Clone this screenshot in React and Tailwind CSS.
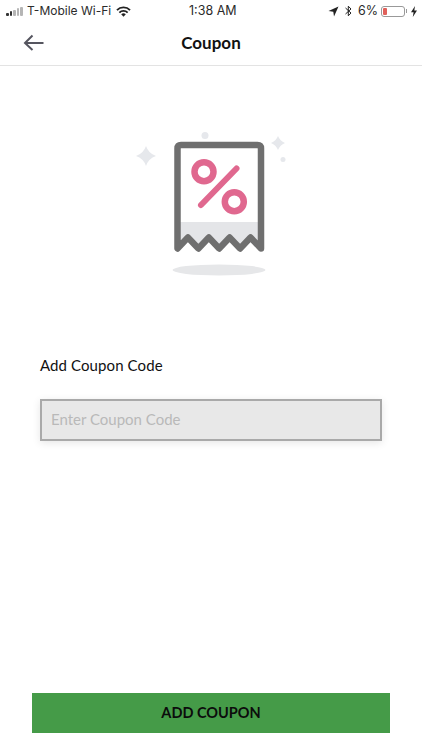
export default function App() {
  const lato = { fontFamily: 'Lato, "Open Sans", sans-serif' };
  return (
    <div className="w-[422px] h-[750px] bg-white flex flex-col overflow-hidden" style={lato}>
      <div className="h-[22px] relative flex items-center pl-[6px] pr-[5px] text-[13px] text-[#2b2b2b] font-['Inter',sans-serif]">
        <div className="flex items-end gap-[1px] w-[18px] h-[9px]">
          <span className="w-[2.5px] h-[3px] bg-[#333] rounded-[1px]" />
          <span className="w-[2.5px] h-[4.5px] bg-[#333] rounded-[1px]" />
          <span className="w-[2.5px] h-[6px] bg-[#b5b5b5] rounded-[1px]" />
          <span className="w-[2.5px] h-[8px] bg-[#b5b5b5] rounded-[1px]" />
          <span className="w-[2.5px] h-[9px] bg-[#b5b5b5] rounded-[1px]" />
        </div>
        <span className="ml-[3px] text-[12px] whitespace-nowrap">T-Mobile Wi-Fi</span>
        <svg className="ml-[5px]" width="15" height="11" viewBox="0 0 15 11">
          <path d="M0.3 3.4A10.2 10.2 0 0 1 14.700 3.4L13.400 4.800A8.300 8.300 0 0 0 1.600 4.800Z" fill="#222" />
          <path d="M2.700 5.900A6.800 6.800 0 0 1 12.300 5.900L11 7.200A5 5 0 0 0 4 7.200Z" fill="#222" />
          <path d="M5.200 8.300A3.300 3.300 0 0 1 9.800 8.300L7.500 10.700Z" fill="#222" />
        </svg>
        <span className="absolute left-[189px] text-[12.5px] whitespace-nowrap">1:38 AM</span>
        <div className="ml-auto flex items-center">
          <svg width="11" height="11" viewBox="0 0 11 11">
            <path d="M10.500 0.500L0.500 5L5.300 5.700L6 10.500Z" fill="#222" />
          </svg>
          <svg className="ml-[6px]" width="7" height="12" viewBox="0 0 7 12" fill="none">
            <path d="M0.500 3L6 8L3.300 10.800V1.200L6 4L0.500 9" stroke="#222" strokeWidth="1" />
          </svg>
          <span className="ml-[6px] text-[12.5px]">6%</span>
          <div className="ml-[3px] relative w-[24px] h-[11px] border border-[#999] rounded-[3px] p-[1px]">
            <div className="w-[4px] h-full bg-[#e0605a] rounded-[1px]" />
          </div>
          <span className="ml-[1px] w-[1px] h-[4px] bg-[#999]" />
          <svg className="ml-[4px]" width="6" height="11" viewBox="0 0 6 11">
            <path d="M4 0L0 6.300H2.600L1.800 11L6 4.400H3.300Z" fill="#222" />
          </svg>
        </div>
      </div>

      <div className="h-[44px] relative flex items-center justify-center border-b border-[#e3e3e3]">
        <svg className="absolute left-[23px] top-[11px]" width="22" height="18" viewBox="0 0 22 18" fill="none">
          <path d="M20.500 10H2M9.500 2.500L2 10L9.500 17" stroke="#55555f" strokeWidth="2" />
        </svg>
        <span className="text-[17px] font-bold text-[#111] mt-[-1px]">Coupon</span>
      </div>

      <svg className="ml-[125px] mt-[54px] shrink-0" width="175" height="165" viewBox="125 120 175 165" fill="none">
        <ellipse cx="219" cy="270" rx="46.500" ry="5.500" fill="#e6e7e9" />
        <path d="M146 146Q148.500 153.500 156 156Q148.500 158.500 146 166Q143.500 158.500 136 156Q143.500 153.500 146 146Z" fill="#e6e8ec" />
        <path d="M278 136Q280 141 285 143Q280 145 278 150Q276 145 271 143Q276 141 278 136Z" fill="#e6e8ec" />
        <circle cx="205" cy="135.500" r="3.500" fill="#e6e8ec" />
        <circle cx="283" cy="159.500" r="2.500" fill="#e6e8ec" />
        <path d="M177.500 222H261V248.500L250.500 237.500L240.100 248.500L229.600 237.500L219.200 248.500L208.800 237.500L198.400 248.500L187.900 237.500L177.500 248.500Z" fill="#e4e5e8" />
        <path d="M177.500 248.500V148.500Q177.500 145 181 145H257.500Q261 145 261 148.500V248.500L250.500 237.500L240.100 248.500L229.600 237.500L219.200 248.500L208.800 237.500L198.400 248.500L187.900 237.500Z" stroke="#6f6f6f" strokeWidth="6.500" strokeLinejoin="round" />
        <circle cx="204" cy="171.700" r="9.500" stroke="#e0688f" strokeWidth="6.500" />
        <circle cx="234.300" cy="201.700" r="9.500" stroke="#e0688f" strokeWidth="6.500" />
        <path d="M236.500 168.500L201 205" stroke="#e0688f" strokeWidth="6" strokeLinecap="round" />
      </svg>

      <label className="ml-[40px] mt-[70px] text-[15px] leading-[20px] font-normal tracking-[0.1px] text-[#111]">Add Coupon Code</label>

      <input
        readOnly
        placeholder="Enter Coupon Code"
        className="ml-[40px] mt-[24px] w-[342px] h-[42px] shrink-0 border-2 border-[#a9a9a9] bg-[#e8e8e8] pl-[9px] pr-[8px] pb-[3px] text-[15px] outline-none shadow-[0_2px_8px_rgba(0,0,0,0.1)] placeholder:text-[#b9b9b9]"
      />

      <button className="ml-[32px] mt-[252px] w-[358px] h-[40px] shrink-0 bg-[#459b48] text-[14.5px] font-bold text-[#0c0c0c]">
        ADD COUPON
      </button>
    </div>
  );
}
